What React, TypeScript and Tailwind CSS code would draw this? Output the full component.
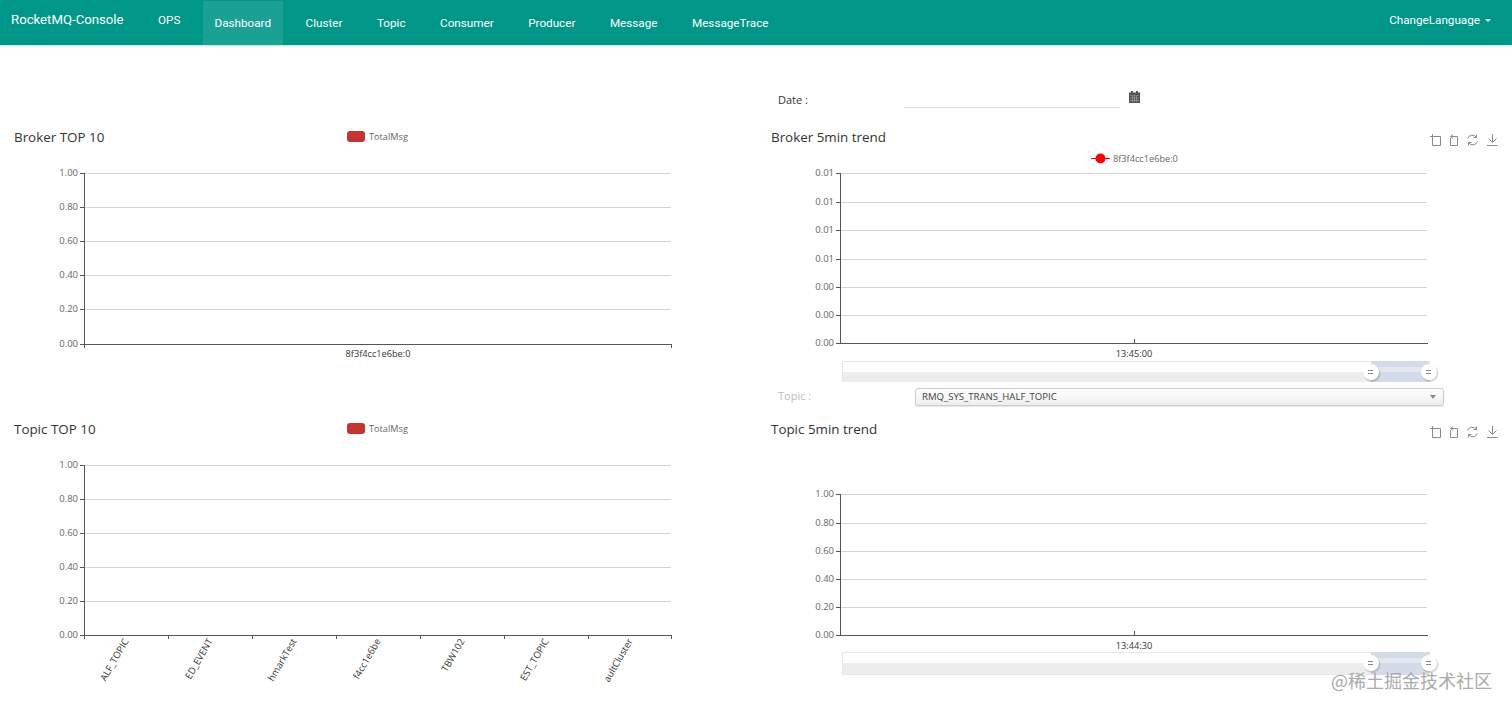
const navItems = ["Dashboard", "Cluster", "Topic", "Consumer", "Producer", "Message", "MessageTrace"];

// y positions are local to the chart svg
function YAxis({ x0, x1, ys, labels }: { x0: number; x1: number; ys: number[]; labels: string[] }) {
  return (
    <g>
      {ys.map((y, i) => (
        <g key={y}>
          {i < ys.length - 1 && <line x1={x0} x2={x1} y1={y + 0.5} y2={y + 0.5} stroke="#d4d4d4" />}
          <line x1={x0 - 4} x2={x0} y1={y + 0.5} y2={y + 0.5} stroke="#555" />
          <text x={x0 - 6} y={y + 3} textAnchor="end" fontSize="9.5" fill="#666">
            {labels[i]}
          </text>
        </g>
      ))}
      <line x1={x0 + 0.5} x2={x0 + 0.5} y1={ys[0]} y2={ys[ys.length - 1]} stroke="#555" />
      <line x1={x0} x2={x1 + 1} y1={ys[ys.length - 1] + 0.5} y2={ys[ys.length - 1] + 0.5} stroke="#555" />
    </g>
  );
}

function Slider({ y }: { y: number }) {
  return (
    <g>
      <rect x="86.5" y={y + 0.5} width="587" height="22" fill="#fff" stroke="#e6e6e6" />
      <rect x="87" y={y + 11} width="586" height="11" fill="#ebedee" />
      <rect x="615" y={y} width="58" height="23" fill="#d3dbe9" />
      <rect x="622" y={y + 6} width="46" height="5" fill="#e2e7f0" />
      {[615, 673].map((cx) => (
        <g key={cx}>
          <circle cx={cx + 1} cy={y + 12.5} r="8.5" fill="#000" opacity="0.15" />
          <circle cx={cx} cy={y + 11} r="8" fill="#fff" />
          <line x1={cx - 3} x2={cx + 2} y1={y + 9.5} y2={y + 9.5} stroke="#888" />
          <line x1={cx - 3} x2={cx + 2} y1={y + 12.5} y2={y + 12.5} stroke="#888" />
        </g>
      ))}
    </g>
  );
}

function Toolbox() {
  return (
    <svg width="68" height="12" viewBox="0 0 68 12" fill="none" stroke="#8a8a8a" strokeWidth="1">
      <path d="M2.5 2.5H10.5V11.5H2.5V0M0 2.5H5" />
      <path d="M20.5 2.5H27.5V11.5H20.5V4M20.5 2.5L23 0.5M20.5 2.5L23 4.5" />
      <path d="M37.6 4.5A5 5 0 0 1 46.5 3.5M47.4 7.5A5 5 0 0 1 38.5 8.5M46.5 0.5V3.5H43.5M38.5 11.5V8.5H41.5" />
      <path d="M62.5 0V8M58.5 4.5L62.5 8.5L66.5 4.5M57 11.5H67.5" />
    </svg>
  );
}

function Legend() {
  return (
    <div className="flex items-center gap-[4px] text-[9.2px] text-[#666]">
      <span className="w-[18px] h-[11px] rounded-[3px] bg-[#c23531]" />
      <span>TotalMsg</span>
    </div>
  );
}

function BarChart({ ys, children }: { ys: number[]; children: React.ReactNode }) {
  return (
    <svg width="756" height="268" className="block">
      <YAxis x0={84} x1={671} ys={ys} labels={["1.00", "0.80", "0.60", "0.40", "0.20", "0.00"]} />
      {children}
    </svg>
  );
}

const topicTicks = [84, 168, 252, 336, 420, 504, 588, 671];
const topicLabels = ["ALF_TOPIC", "ED_EVENT", "hmarkTest", "f4cc1e6be", "TBW102", "EST_TOPIC", "aultCluster"];

export default function App() {
  return (
    <div className="relative w-[1512px] h-[711px] overflow-hidden bg-white font-['Open_Sans',sans-serif] text-[#333]">
      {/* Navbar */}
      <nav className="h-[45px] bg-[#009688] flex items-start text-white font-['Roboto',sans-serif] shadow-[0_1px_2px_rgba(0,150,136,0.3)]">
        <span className="ml-[11px] mt-[11px] text-[13.2px] leading-[18px] w-[147px]">RocketMQ-Console</span>
        <span className="mt-[12px] text-[11.7px] leading-[17px] w-[45px]">OPS</span>
        <div className="flex gap-[11.5px] h-full pt-[1px]">
          {navItems.map((item, i) => (
            <span
              key={item}
              className={`h-[44px] px-[11.5px] pt-[14px] text-[11.7px] leading-[17px] ${i === 0 ? "bg-white/10" : ""}`}
            >
              {item}
            </span>
          ))}
        </div>
        <div className="ml-auto mr-[21px] mt-[12px] flex items-center gap-[4px] text-[11.7px] leading-[17px]">
          <span>ChangeLanguage</span>
          <span className="ml-[1px] w-0 h-0 border-x-[3px] border-x-transparent border-t-[3px] border-t-white" />
        </div>
      </nav>

      <main className="grid grid-cols-[756px_756px]">
        {/* Date row */}
        <div className="h-[80px]" />
        <div className="h-[80px] pl-[22px] pt-[46px] flex items-start">
          <span className="w-[126px] mt-[1px] text-[11px] leading-[16px]">Date :</span>
          <div className="w-[216px] h-[17px] border-b border-[#ddd]" />
          <svg className="ml-[9px]" width="11" height="12" viewBox="0 0 11 12" fill="#555">
            <path d="M2 0h2v1.5H2zM7 0h2v1.5H7zM0 1.5h11V12H0z" />
            <path d="M1 4.5h9v.6H1zM1 6.7h9v.6H1zM1 8.9h9v.6H1zM3 4.5h.6V11H3zM5.2 4.5h.6V11h-.6zM7.4 4.5H8V11h-.6z" fill="#aaa" />
          </svg>
        </div>

        {/* Left column */}
        <div className="col-start-1 row-start-2 flex flex-col">
          <div className="h-[24px] flex items-center">
            <h2 className="w-[347px] pl-[14px] text-[13.4px] leading-[24px]">Broker TOP 10</h2>
            <Legend />
          </div>
          <BarChart ys={[24, 58, 92, 126, 160, 195]}>
            <line x1="84.5" x2="84.5" y1="195" y2="199" stroke="#555" />
            <line x1="671.5" x2="671.5" y1="195" y2="199" stroke="#555" />
            <text x="378" y="208" textAnchor="middle" fontSize="9.2" fill="#333">
              8f3f4cc1e6be:0
            </text>
          </BarChart>
          <div className="h-[24px] flex items-center">
            <h2 className="w-[347px] pl-[14px] text-[13.4px] leading-[24px]">Topic TOP 10</h2>
            <Legend />
          </div>
          <BarChart ys={[24, 58, 92, 126, 160, 194]}>
            {topicTicks.map((x) => (
              <line key={x} x1={x + 0.5} x2={x + 0.5} y1="194" y2="198" stroke="#555" />
            ))}
            {topicLabels.map((label, i) => (
              <text
                key={label}
                transform={`translate(${topicTicks[i] + 45} 200) rotate(-60)`}
                textAnchor="end"
                fontSize="9.5"
                fill="#333"
              >
                {label}
              </text>
            ))}
          </BarChart>
        </div>

        {/* Right column */}
        <div className="col-start-2 row-start-2 flex flex-col">
          <div className="h-[24px] pl-[15px] pr-[14px] flex items-center justify-between">
            <h2 className="text-[13.4px] leading-[24px]">Broker 5min trend</h2>
            <div className="mt-[6px]">
              <Toolbox />
            </div>
          </div>
          <svg width="756" height="233" className="block">
            <line x1="335" x2="354" y1="9.5" y2="9.5" stroke="#f00" />
            <circle cx="344.5" cy="9.5" r="5" fill="#f00" />
            <text x="357" y="12.5" fontSize="9.2" fill="#666">
              8f3f4cc1e6be:0
            </text>
            <YAxis
              x0={84}
              x1={671}
              ys={[24, 53, 81, 110, 138, 166, 194]}
              labels={["0.01", "0.01", "0.01", "0.01", "0.00", "0.00", "0.00"]}
            />
            <line x1="378.5" x2="378.5" y1="190" y2="194" stroke="#555" />
            <text x="378" y="208" textAnchor="middle" fontSize="9.2" fill="#333">
              13:45:00
            </text>
            <Slider y={212} />
          </svg>
          <div className="h-[35px] pl-[22px] pt-[5px] flex items-start">
            <span className="w-[137px] text-[11px] leading-[17px] text-[#bbb]">Topic :</span>
            <div className="mt-[1px] w-[529px] h-[18px] px-[6px] flex items-center justify-between rounded-[3px] border border-[#ccc] bg-gradient-to-b from-white to-[#eee] shadow-[0_1px_1px_rgba(0,0,0,0.1)] text-[9.6px] text-[#444]">
              <span>RMQ_SYS_TRANS_HALF_TOPIC</span>
              <span className="mr-[1px] w-0 h-0 border-x-[3px] border-x-transparent border-t-[4px] border-t-[#888]" />
            </div>
          </div>
          <div className="h-[24px] pl-[15px] pr-[14px] flex items-center justify-between">
            <h2 className="text-[13.4px] leading-[24px]">Topic 5min trend</h2>
            <div className="mt-[6px]">
              <Toolbox />
            </div>
          </div>
          <svg width="756" height="268" className="block">
            <YAxis
              x0={84}
              x1={671}
              ys={[53, 82, 110, 138, 166, 194]}
              labels={["1.00", "0.80", "0.60", "0.40", "0.20", "0.00"]}
            />
            <line x1="378.5" x2="378.5" y1="190" y2="194" stroke="#555" />
            <text x="378" y="208" textAnchor="middle" fontSize="9.2" fill="#333">
              13:44:30
            </text>
            <Slider y={211} />
          </svg>
        </div>
      </main>

      {/* Watermark */}
      <div className="absolute left-[1331px] top-[668px] text-[18px] leading-[24px] text-[#aaa] font-['Noto_Sans_CJK_SC',sans-serif] whitespace-nowrap">
        @稀土掘金技术社区
      </div>
    </div>
  );
}
